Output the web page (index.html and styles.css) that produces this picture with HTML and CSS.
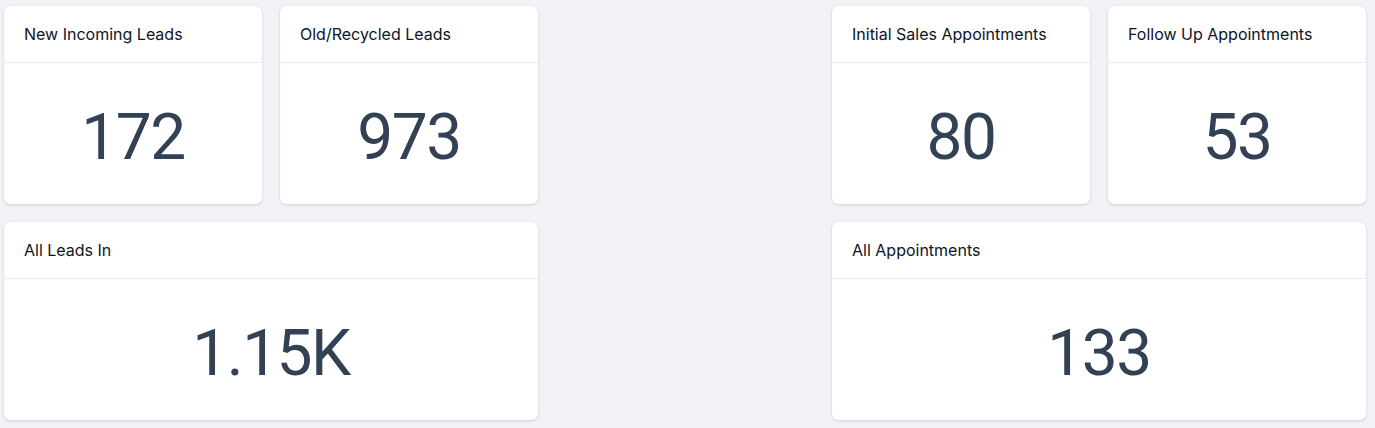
FILE: index.html
```html
<!DOCTYPE html>
<html>
<head>
<meta charset="utf-8">
<link rel="stylesheet" href="styles.css">
</head>
<body>
<div class="grid">
  <div class="card c1"><div class="head">New Incoming Leads</div><div class="body">172</div></div>
  <div class="card c2"><div class="head">Old/Recycled Leads</div><div class="body">973</div></div>
  <div class="card c4"><div class="head">Initial Sales Appointments</div><div class="body">80</div></div>
  <div class="card c5"><div class="head">Follow Up Appointments</div><div class="body">53</div></div>
  <div class="card wide-l"><div class="head">All Leads In</div><div class="body">1.15K</div></div>
  <div class="card wide-r"><div class="head">All Appointments</div><div class="body">133</div></div>
</div>
</body>
</html>
```
FILE: styles.css
```css
html, body { margin: 0; padding: 0; }
body {
  background: #f2f3f7;
  font-family: Inter, "Noto Sans", sans-serif;
  width: 1375px;
  height: 428px;
  overflow: hidden;
}
.grid {
  display: grid;
  grid-template-columns: repeat(5, 258px);
  grid-template-rows: 198px 198px;
  gap: 18px;
  padding: 6px 0 0 4px;
}
.card {
  background: #fff;
  border-radius: 6px;
  box-shadow: 0 1px 3px rgba(15, 23, 42, 0.14), 0 0 1px rgba(15, 23, 42, 0.12);
  display: flex;
  flex-direction: column;
}
.c1 { grid-column: 1; grid-row: 1; }
.c2 { grid-column: 2; grid-row: 1; }
.c4 { grid-column: 4; grid-row: 1; }
.c5 { grid-column: 5; grid-row: 1; }
.wide-l { grid-column: 1 / span 2; grid-row: 2; }
.wide-r { grid-column: 4 / span 2; grid-row: 2; }
.head {
  height: 57px;
  box-sizing: border-box;
  border-bottom: 1px solid #e8e9ee;
  padding: 0 20px;
  display: flex;
  align-items: center;
  font-size: 16px;
  color: #0d1526;
}
.body {
  flex: 1;
  display: flex;
  align-items: center;
  justify-content: center;
  padding-top: 8px;
  font-family: Roboto, "Liberation Sans", sans-serif;
  font-size: 64px;
  font-weight: 400;
  letter-spacing: -1.5px;
  color: #334155;
}
```
